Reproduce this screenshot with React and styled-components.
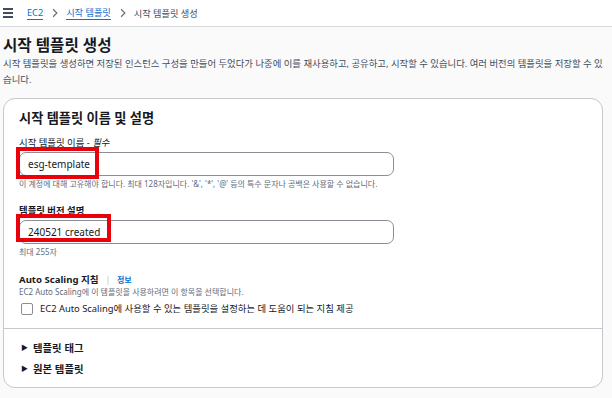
import styled, { createGlobalStyle } from "styled-components";

const GlobalStyle = createGlobalStyle`
  body {
    margin: 0;
    background: #fafafa;
    font-family: "Noto Sans", "Noto Sans CJK KR", sans-serif;
    color: #16191f;
  }
`;

export default function App() {
  return (
    <>
      <GlobalStyle />
      <Nav>
        <Hamburger>
          <span />
          <span />
          <span />
        </Hamburger>
        <Crumb href="#">EC2</Crumb>
        <Chevron />
        <Crumb href="#">시작 템플릿</Crumb>
        <Chevron />
        <Current>시작 템플릿 생성</Current>
      </Nav>
      <Main>
        <Title>시작 템플릿 생성</Title>
        <Lead>
          시작 템플릿을 생성하면 저장된 인스턴스 구성을 만들어 두었다가 나중에 이를 재사용하고, 공유하고, 시작할 수 있습니다. 여러 버전의 템플릿을 저장할 수 있습니다.
        </Lead>
        <Card>
          <CardBody>
            <CardTitle>시작 템플릿 이름 및 설명</CardTitle>
            <Label>
              시작 템플릿 이름 - <em>필수</em>
            </Label>
            <Field>
              <Input value="esg-template" readOnly />
              <Highlight width={83} height={32} top={-5} />
            </Field>
            <Hint after={14}>
              이 계정에 대해 고유해야 합니다. 최대 128자입니다. '&amp;', '*', '@' 등의 특수 문자나 공백은 사용할 수 없습니다.
            </Hint>
            <Label strong>템플릿 버전 설명</Label>
            <Field>
              <Input value="240521 created" readOnly />
              <Highlight width={95} height={28} top={-6} />
            </Field>
            <Hint after={16}>최대 255자</Hint>
            <SubHeading>
              Auto Scaling 지침 <Divider>|</Divider> <Info href="#">정보</Info>
            </SubHeading>
            <Hint before={0} after={4}>
              EC2 Auto Scaling에 이 템플릿을 사용하려면 이 항목을 선택합니다.
            </Hint>
            <CheckRow>
              <Box />
              EC2 Auto Scaling에 사용할 수 있는 템플릿을 설정하는 데 도움이 되는 지침 제공
            </CheckRow>
          </CardBody>
          <Expanders>
            <Expander>
              <Caret>▶</Caret>템플릿 태그
            </Expander>
            <Expander>
              <Caret>▶</Caret>원본 템플릿
            </Expander>
          </Expanders>
        </Card>
      </Main>
    </>
  );
}

function Chevron() {
  return (
    <ChevronIcon viewBox="0 0 8 12" width="6" height="10">
      <path d="M1.5 1 L6.5 6 L1.5 11" fill="none" stroke="#5f6b7a" strokeWidth="1.5" />
    </ChevronIcon>
  );
}

const Nav = styled.nav`
  height: 26px;
  background: #fff;
  border-bottom: 1px solid #d5d9de;
  display: flex;
  align-items: center;
  padding-left: 3px;
  font-size: 9.2px;
`;

const Hamburger = styled.div`
  display: flex;
  flex-direction: column;
  gap: 2px;
  width: 10px;
  margin-right: 14px;
  span {
    display: block;
    height: 2px;
    background: #414d5c;
  }
`;

const Crumb = styled.a`
  color: #0972d3;
  text-decoration: none;
  border-bottom: 1px solid #0972d3;
  line-height: 13px;
`;

const ChevronIcon = styled.svg`
  margin: 0 8px 0 9px;
`;

const Current = styled.span`
  color: #414d5c;
`;

const Main = styled.main`
  padding: 7px 9px 0 3px;
`;

const Title = styled.h1`
  margin: 0;
  font-size: 15.6px;
  line-height: 22px;
  font-weight: 700;
`;

const Lead = styled.p`
  margin: 0;
  font-size: 9.4px;
  line-height: 16px;
  color: #414d5c;
`;

const Card = styled.section`
  margin-top: 10px;
  background: #fff;
  border: 1px solid #c6c6cd;
  border-radius: 12px;
  overflow: hidden;
`;

const CardBody = styled.div`
  padding: 10px 15px 12px;
  border-bottom: 1px solid #c6c6cd;
`;

const CardTitle = styled.h2`
  margin: 0 0 9px;
  font-size: 13.2px;
  line-height: 18px;
  font-weight: 700;
`;

const Label = styled.div`
  font-size: 9.4px;
  line-height: 14px;
  font-weight: ${(p) => (p.strong ? 700 : 400)};
  margin-bottom: 2px;
  em {
    font-style: italic;
  }
`;

const Field = styled.div`
  position: relative;
  width: 375px;
`;

const Input = styled.input`
  box-sizing: border-box;
  display: block;
  width: 100%;
  height: 24px;
  border: 1px solid #8c8c94;
  border-radius: 7px;
  padding: 0 8px;
  font-family: inherit;
  font-size: 10px;
  color: #16191f;
  background: #fff;
  outline: none;
`;

const Highlight = styled.div`
  position: absolute;
  left: -3px;
  top: ${(p) => p.top}px;
  width: ${(p) => p.width}px;
  height: ${(p) => p.height}px;
  box-sizing: border-box;
  border: 4px solid #e8000a;
  pointer-events: none;
`;

const Hint = styled.div`
  font-size: 8px;
  line-height: 12px;
  color: #5f6b7a;
  margin: ${(p) => p.before ?? 2}px 0 ${(p) => p.after ?? 12}px;
`;

const SubHeading = styled.div`
  font-size: 9.6px;
  line-height: 12px;
  font-weight: 700;
`;

const Divider = styled.span`
  font-weight: 400;
  color: #c6c6cd;
  margin: 0 4px;
`;

const Info = styled.a`
  color: #0972d3;
  text-decoration: none;
  font-size: 8px;
`;

const CheckRow = styled.label`
  display: flex;
  align-items: center;
  gap: 7px;
  font-size: 9.4px;
  line-height: 14px;
  margin-left: 2px;
`;

const Box = styled.span`
  width: 10px;
  height: 10px;
  border: 1px solid #8c8c94;
  border-radius: 2px;
  background: #fff;
`;

const Expanders = styled.div`
  padding: 12px 17px 11px;
  display: flex;
  flex-direction: column;
  gap: 7px;
`;

const Expander = styled.div`
  display: flex;
  align-items: center;
  font-size: 10.4px;
  line-height: 14px;
  font-weight: 700;
`;

const Caret = styled.span`
  font-size: 7px;
  margin-right: 5px;
`;
